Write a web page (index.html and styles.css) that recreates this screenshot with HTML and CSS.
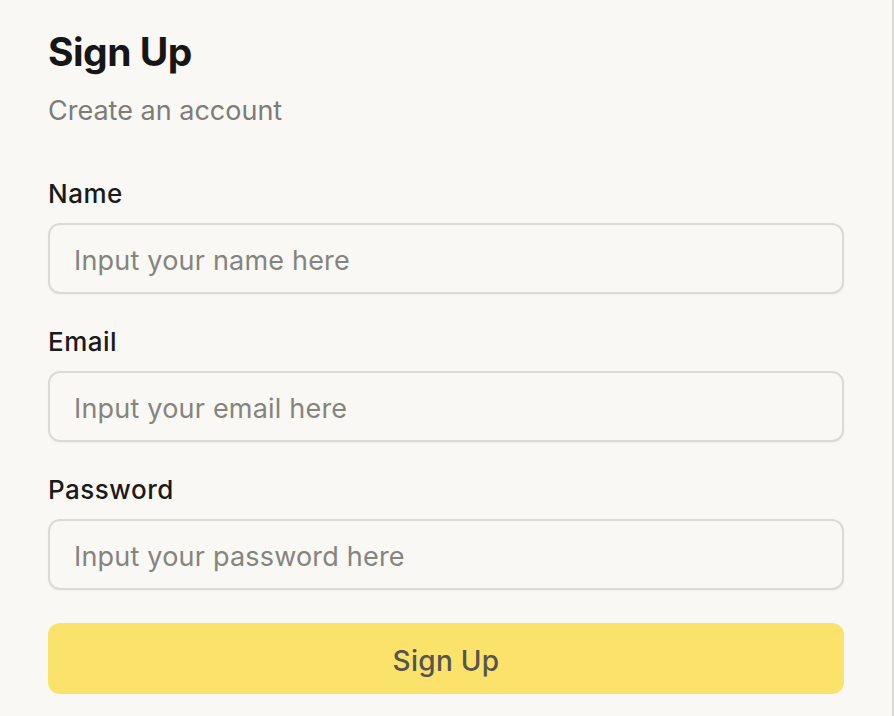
FILE: index.html
```html
<!DOCTYPE html>
<html>
<head>
<meta charset="utf-8">
<link rel="stylesheet" href="styles.css">
</head>
<body>
<div class="page">
  <form class="form">
    <h1 class="title">Sign Up</h1>
    <p class="subtitle">Create an account</p>
    <div class="field">
      <label class="label">Name</label>
      <input class="input" type="text" placeholder="Input your name here">
    </div>
    <div class="field">
      <label class="label">Email</label>
      <input class="input" type="email" placeholder="Input your email here">
    </div>
    <div class="field">
      <label class="label">Password</label>
      <input class="input" type="password" placeholder="Input your password here">
    </div>
    <button class="button" type="button">Sign Up</button>
  </form>
</div>
</body>
</html>
```
FILE: styles.css
```css
html, body {
  margin: 0;
  padding: 0;
  height: 100%;
}
body {
  background: #f9f8f4;
  font-family: Inter, "Noto Sans", sans-serif;
  overflow: hidden;
}
.page {
  height: 100%;
  border-right: 2px solid #d8d7d3;
  box-sizing: border-box;
}
.form {
  width: 796px;
  padding: 28px 0 0 48px;
  display: flex;
  flex-direction: column;
}
.title {
  margin: 0;
  font-size: 39px;
  line-height: 48px;
  font-weight: 700;
  color: #161616;
  letter-spacing: -0.5px;
}
.subtitle {
  margin: 18px 0 0;
  font-size: 27px;
  line-height: 34px;
  color: #7d7c78;
  font-weight: 400;
}
.field {
  display: flex;
  flex-direction: column;
  margin-top: 31px;
}
.form .field:first-of-type {
  margin-top: 49px;
}
.label {
  font-size: 26px;
  line-height: 34px;
  font-weight: 500;
  letter-spacing: 0.5px;
  color: #1a1a1a;
  margin-bottom: 12px;
}
.input {
  box-sizing: border-box;
  height: 71px;
  width: 100%;
  border: 2px solid #dcdad5;
  border-radius: 12px;
  background: #f9f8f4;
  padding: 4px 24px 0;
  font-family: inherit;
  font-size: 27px;
  letter-spacing: 0.2px;
  color: #171717;
  outline: none;
  box-shadow: 0 1px 2px rgba(0,0,0,0.04);
}
.input::placeholder {
  color: #85847f;
}
.button {
  margin-top: 33px;
  height: 71px;
  border: none;
  border-radius: 12px;
  background: #fbe26b;
  padding: 4px 0 0;
  font-family: inherit;
  font-size: 28px;
  font-weight: 500;
  letter-spacing: 0.3px;
  color: #55544f;
}
```
